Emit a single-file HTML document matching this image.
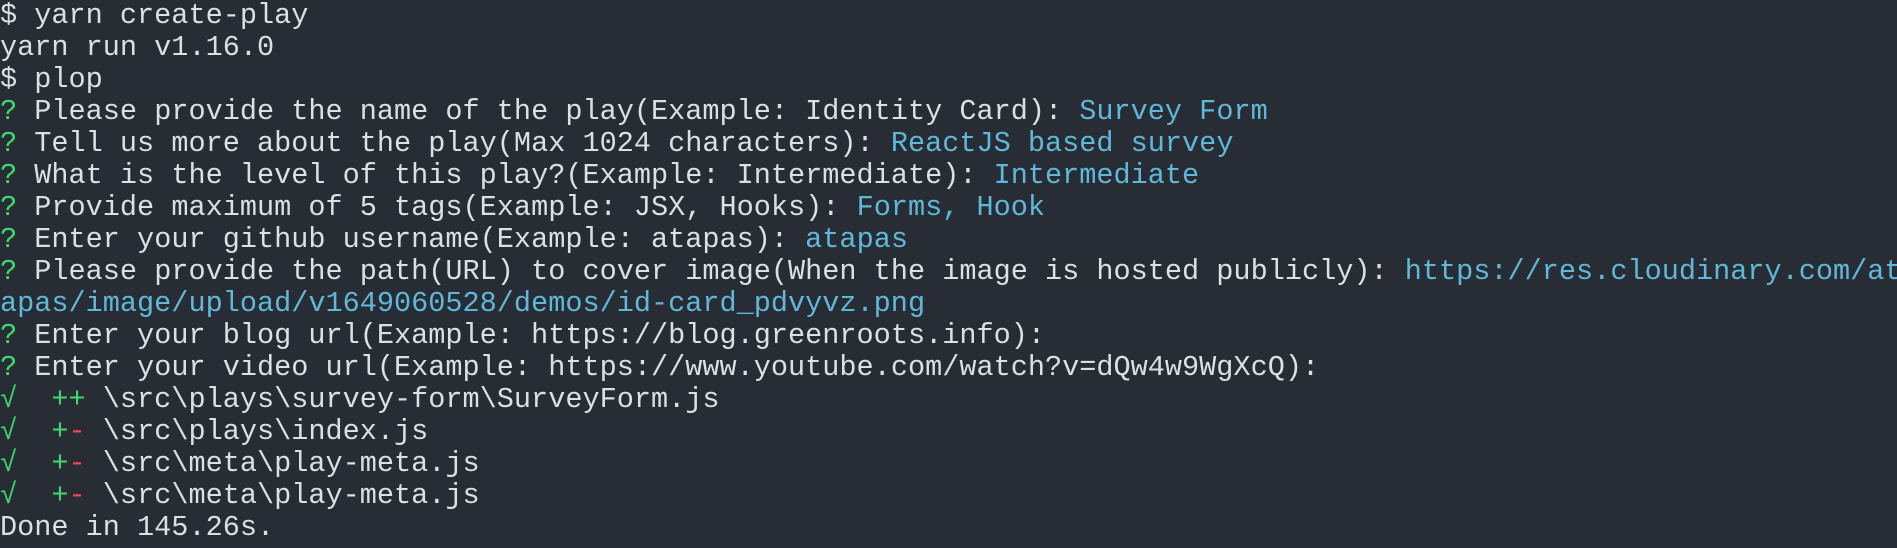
<!DOCTYPE html>
<html><head><style>
html,body{margin:0;padding:0;background:#282c34;width:1897px;height:548px;overflow:hidden}
pre{margin:0;padding:0;font-family:"Liberation Mono",monospace;font-size:28.55px;line-height:32px;color:#dcdfe4;white-space:pre}
.g{color:#3ddc6e}.c{color:#5fb8d8}.r{color:#f14c4c}
</style></head><body><pre>$ yarn create-play
yarn run v1.16.0
$ plop
<span class="g">?</span> Please provide the name of the play(Example: Identity Card): <span class="c">Survey Form</span>
<span class="g">?</span> Tell us more about the play(Max 1024 characters): <span class="c">ReactJS based survey</span>
<span class="g">?</span> What is the level of this play?(Example: Intermediate): <span class="c">Intermediate</span>
<span class="g">?</span> Provide maximum of 5 tags(Example: JSX, Hooks): <span class="c">Forms, Hook</span>
<span class="g">?</span> Enter your github username(Example: atapas): <span class="c">atapas</span>
<span class="g">?</span> Please provide the path(URL) to cover image(When the image is hosted publicly): <span class="c">https://res.cloudinary.com/at
apas/image/upload/v1649060528/demos/id-card_pdvyvz.png</span>
<span class="g">?</span> Enter your blog url(Example: https://blog.greenroots.info):
<span class="g">?</span> Enter your video url(Example: https://www.youtube.com/watch?v=dQw4w9WgXcQ):
<span class="g">√  ++</span> \src\plays\survey-form\SurveyForm.js
<span class="g">√  +</span><span class="r">-</span> \src\plays\index.js
<span class="g">√  +</span><span class="r">-</span> \src\meta\play-meta.js
<span class="g">√  +</span><span class="r">-</span> \src\meta\play-meta.js
Done in 145.26s.</pre></body></html>
